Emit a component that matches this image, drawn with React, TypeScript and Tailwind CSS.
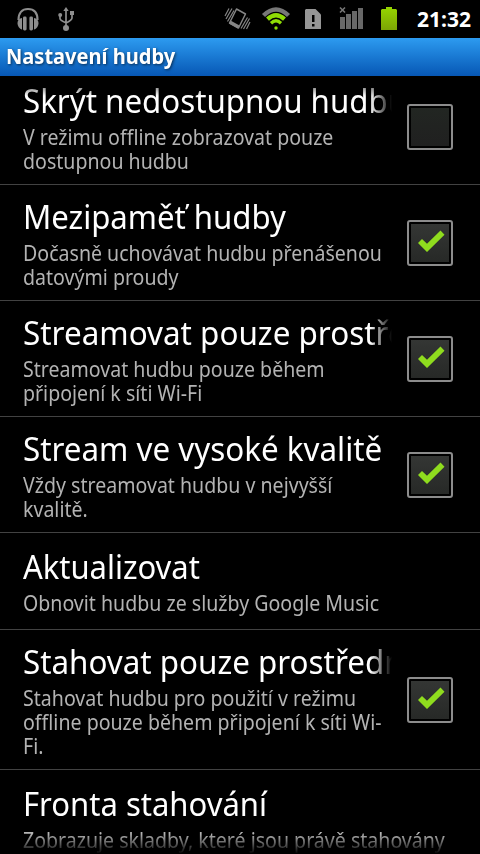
interface Setting {
  title: string;
  lines: string[];
  scale: string;
  checked?: boolean;
  fade?: boolean;
}

const settings: Setting[] = [
  { title: 'Skrýt nedostupnou hudbu', scale: 'scale-x-[0.947]', lines: ['V režimu offline zobrazovat pouze', 'dostupnou hudbu'], checked: false, fade: true },
  { title: 'Mezipaměť hudby', scale: 'scale-x-[0.944]', lines: ['Dočasně uchovávat hudbu přenášenou', 'datovými proudy'], checked: true },
  { title: 'Streamovat pouze prostřednictvím Wi-Fi', scale: 'scale-x-[0.952]', lines: ['Streamovat hudbu pouze během', 'připojení k síti Wi-Fi'], checked: true, fade: true },
  { title: 'Stream ve vysoké kvalitě', scale: 'scale-x-[0.95]', lines: ['Vždy streamovat hudbu v nejvyšší', 'kvalitě.'], checked: true },
  { title: 'Aktualizovat', scale: 'scale-x-[0.938]', lines: ['Obnovit hudbu ze služby Google Music'] },
  { title: 'Stahovat pouze prostřednictvím Wi-Fi', scale: 'scale-x-[0.95]', lines: ['Stahovat hudbu pro použití v režimu', 'offline pouze během připojení k síti Wi-', 'Fi.'], checked: true, fade: true },
  { title: 'Fronta stahování', scale: 'scale-x-[0.94]', lines: ['Zobrazuje skladby, které jsou právě stahovány'] },
];

function StatusBar() {
  return (
    <header className="flex h-[38px] shrink-0 items-center bg-black">
      {/* Headphones */}
      <svg className="ml-[16px]" width="24" height="24" viewBox="0 0 24 24" fill="none">
        <path d="M2.500 13C2.500 6 6 2 12 2s9.500 4 9.500 11" stroke="#8e8e8e" strokeWidth="2.200" />
        <path d="M6 11v11.500C3.500 22 1.500 19 1.500 16S3.500 11.500 6 11z" fill="#8e8e8e" />
        <path d="M18 11v11.500c2.500-.5 4.500-3.500 4.500-6.500S20.500 11.500 18 11z" fill="#8e8e8e" />
        <rect x="7" y="9.500" width="3.600" height="14" rx="1.400" fill="#8e8e8e" />
        <rect x="13.400" y="9.500" width="3.600" height="14" rx="1.400" fill="#8e8e8e" />
      </svg>
      {/* USB */}
      <svg className="ml-[18px]" width="16" height="26" viewBox="0 0 16 26" fill="none">
        <path d="M8 22V3M2 8v4.500q0 2 6 4.200M14 7v5q0 2-6 5" stroke="#8e8e8e" strokeWidth="1.700" />
        <path d="M8 1l2.700 4H5.300z" fill="#8e8e8e" />
        <circle cx="2.200" cy="9" r="2" fill="#8e8e8e" />
        <rect x="12" y="5" width="4" height="4" fill="#8e8e8e" />
        <circle cx="8" cy="22" r="3" fill="#8e8e8e" />
      </svg>
      {/* Vibrate */}
      <svg className="ml-[149px]" width="28" height="24" viewBox="0 0 28 24" fill="none" stroke="#858585">
        <path d="M13.500 2l9 5-7 14-9-5z" strokeWidth="1.500" strokeLinejoin="round" />
        <path d="M7.500 13.500l9 5-1.500 3-9-5z" fill="#858585" stroke="none" />
        <path d="M2 9l4-7.500M3 12l6-10.500M4.500 14.500l6.500-11M18 21.500l6.500-11M20.500 22l6-10.500M23.500 22l3.500-7" strokeWidth="1.200" />
      </svg>
      {/* Wi-Fi */}
      <svg className="ml-[10px]" width="30" height="24" viewBox="0 0 30 24" fill="none">
        <path d="M2.500 8.500Q15-3.500 27.500 8.500" stroke="#777" strokeWidth="4.500" />
        <path d="M6.500 12.200Q15 4.500 23.500 12.200" stroke="#8fdc05" strokeWidth="4.300" />
        <path d="M10 16.200Q15 11.500 20 16.200" stroke="#8fdc05" strokeWidth="3.300" />
        <circle cx="15" cy="21" r="1.700" fill="#8fdc05" />
      </svg>
      {/* Memory card warning */}
      <svg className="ml-[14px]" width="16" height="20" viewBox="0 0 16 20">
        <path d="M1 0h9.500L16 5.500V20H0V1z" fill="#969696" />
        <path d="M7 6h2.500v7H7zM7 15h2.500v2.500H7z" fill="#000" />
      </svg>
      {/* No signal */}
      <svg className="ml-[18px]" width="25" height="24" viewBox="0 0 25 24">
        <path d="M1 10h5v12H1zM7 7h5v15H7zM13 4h5v18h-5zM19 1h5v21h-5z" fill="#686868" />
        <path d="M1 .5l5 5M6 .5l-5 5" stroke="#777" strokeWidth="1.500" />
      </svg>
      {/* Battery */}
      <svg className="ml-[17px]" width="16" height="24" viewBox="0 0 16 24">
        <defs>
          <linearGradient id="battery" x1="0" y1="0" x2="0" y2="1">
            <stop offset="0" stopColor="#96d600" />
            <stop offset="1" stopColor="#7ca505" />
          </linearGradient>
        </defs>
        <path d="M5 0h6v2h4l1 1v20H0V3l1-1h4z" fill="url(#battery)" />
      </svg>
      <span className="ml-[20px] text-[21px] leading-[38px] font-bold text-white">21:32</span>
    </header>
  );
}

function CheckBox({ checked }: { checked: boolean }) {
  return (
    <div className="h-[46px] w-[46px] shrink-0 rounded-[3px] border-2 border-[#8c8c8c] bg-black p-[2px]">
      <div className={checked ? 'h-full w-full bg-linear-to-b from-[#343634] to-[#272927]' : 'h-full w-full bg-linear-to-b from-[#222622] to-[#202020]'}>
        {checked && (
          <svg width="38" height="38" viewBox="0 0 38 38">
            <path d="M7 19l4-4 5 4.700L29.500 6.500l4 4.200L16 28z" fill="#8fdc1e" />
          </svg>
        )}
      </div>
    </div>
  );
}

function SettingRow({ title, lines, scale, checked, fade }: Setting) {
  return (
    <li className="flex shrink-0 items-center border-b border-[#424242] pl-[23px]">
      <div className={lines.length === 1 ? 'min-h-[96px] min-w-0 flex-1 pt-[14px]' : 'min-w-0 flex-1 pt-[12px] pb-[11px]'}>
        <h2 className={fade ? 'overflow-hidden pb-[4px] text-[33px] leading-[39px] whitespace-nowrap text-white mask-r-from-[calc(100%-22px)] mask-r-to-100%' : 'pb-[4px] text-[33px] leading-[39px] whitespace-nowrap text-white'}>
          <span className={`block w-max origin-left ${scale}`}>{title}</span>
        </h2>
        <p className="mt-px text-[21px] leading-[24px] whitespace-nowrap text-[#b3b3b3]">
          {lines.map((line) => (
            <span key={line} className="block w-max origin-left scale-x-[0.932]">{line}</span>
          ))}
        </p>
      </div>
      {checked !== undefined && (
        <div className="mr-[27px] ml-[15px]">
          <CheckBox checked={checked} />
        </div>
      )}
    </li>
  );
}

export default function App() {
  return (
    <div className="flex h-[854px] w-[480px] flex-col overflow-hidden bg-black font-['Noto_Sans','Open_Sans',sans-serif] [font-variant-ligatures:none]">
      <StatusBar />
      <div className="h-[38px] shrink-0 bg-linear-to-b from-[#2d9bf0] to-[#0757b5] pl-[6px] text-[21px] leading-[36px] font-bold text-white [text-shadow:1px_1px_3px_rgba(0,0,0,0.6)]">
        <span className="block w-max origin-left scale-x-[0.955]">Nastavení hudby</span>
      </div>
      <main className="relative min-h-0 flex-1 overflow-hidden">
        <ul className="-mt-[7px] flex flex-col">
          {settings.map((setting) => (
            <SettingRow key={setting.title} {...setting} />
          ))}
        </ul>
        <div className="absolute inset-x-0 top-0 h-[20px] bg-linear-to-b from-black to-transparent" />
        <div className="absolute inset-x-0 bottom-0 h-[20px] bg-linear-to-t from-black to-transparent" />
      </main>
    </div>
  );
}
